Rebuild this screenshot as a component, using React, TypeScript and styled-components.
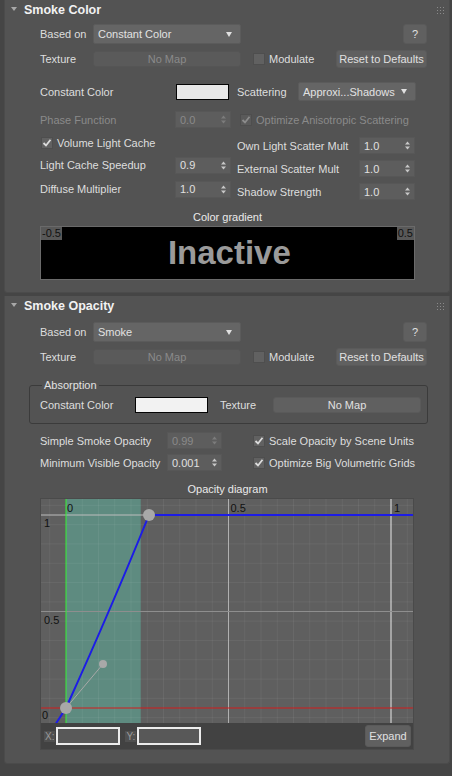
import React from 'react';
import styled, { createGlobalStyle } from 'styled-components';

const GlobalStyle = createGlobalStyle`
  body {
    margin: 0;
    background: #454545;
    font-family: "Liberation Sans", Arial, sans-serif;
    font-size: 11px;
    color: #dedede;
  }
`;

const Page = styled.div`
  width: 452px;
  height: 776px;
  box-sizing: border-box;
`;

const Panel = styled.section<{ $pb: number }>`
  margin: 0 2px 3px 4px;
  background: #535353;
  border: 1px solid #4b4b4b;
  border-top: none;
  border-radius: 0 0 3px 3px;
  padding-bottom: ${(p) => p.$pb}px;
`;

const Header = styled.div`
  height: 20px;
  display: flex;
  align-items: center;
  padding-left: 6px;
  padding-right: 5px;
  font-weight: bold;
  font-size: 12.5px;
  color: #f2f2f2;
`;

const Caret = styled.span`
  width: 0;
  height: 0;
  border-left: 3px solid transparent;
  border-right: 3px solid transparent;
  border-top: 4px solid #a8a8a8;
  margin-right: 7px;
  margin-top: -2px;
`;

const Title = styled.span`
  flex: 1;
`;

const Body = styled.div`
  padding-left: 35px;
  padding-right: 22px;
`;

const Row = styled.div<{ $h: number; $mt: number }>`
  display: flex;
  align-items: center;
  height: ${(p) => p.$h}px;
  margin-top: ${(p) => p.$mt}px;
`;

const Label = styled.span<{ $w?: number; $dim?: boolean; $ml?: number }>`
  width: ${(p) => (p.$w ? `${p.$w}px` : 'auto')};
  flex-shrink: 0;
  margin-left: ${(p) => p.$ml || 0}px;
  color: ${(p) => (p.$dim ? '#8a8a8a' : '#dedede')};
  white-space: nowrap;
`;

const Dropdown = styled.div<{ $w: number }>`
  width: ${(p) => p.$w}px;
  height: 100%;
  box-sizing: border-box;
  background: #656565;
  border: 1px solid #5b5b5b;
  border-radius: 2px;
  display: flex;
  align-items: center;
  padding: 0 8px 0 4px;
  color: #e2e2e2;
  white-space: nowrap;

  &::after {
    content: '';
    margin-left: auto;
    border-left: 3px solid transparent;
    border-right: 3px solid transparent;
    border-top: 5px solid #e0e0e0;
  }
`;

const Button = styled.div<{ $w: number; $h: number; $dim?: boolean; $ml?: number }>`
  width: ${(p) => p.$w}px;
  height: ${(p) => p.$h}px;
  margin-left: ${(p) => (p.$ml === undefined ? 0 : p.$ml)}px;
  box-sizing: border-box;
  background: ${(p) => (p.$dim ? '#5a5a5a' : '#606060')};
  border: 1px solid ${(p) => (p.$dim ? '#555' : '#5a5a5a')};
  border-radius: 3px;
  display: flex;
  align-items: center;
  justify-content: center;
  color: ${(p) => (p.$dim ? '#8a8a8a' : '#e0e0e0')};
  white-space: nowrap;
  flex-shrink: 0;
`;

const Spacer = styled.div`
  flex: 1;
`;

const Swatch = styled.div<{ $w: number; $c: string }>`
  width: ${(p) => p.$w}px;
  height: 16px;
  box-sizing: border-box;
  border: 1px solid #050505;
  background: ${(p) => p.$c};
  flex-shrink: 0;
`;

const Box = styled.div<{ $dim?: boolean; $ml?: number }>`
  width: 12px;
  height: 12px;
  box-sizing: border-box;
  margin-left: ${(p) => p.$ml || 0}px;
  margin-right: 4px;
  background: ${(p) => (p.$dim ? '#5a5a5a' : '#616161')};
  border: 1px solid #4e4e4e;
  display: flex;
  align-items: center;
  justify-content: center;
  flex-shrink: 0;
`;

const Spin = styled.div<{ $w: number; $dim?: boolean }>`
  width: ${(p) => p.$w}px;
  height: 17px;
  box-sizing: border-box;
  background: #5d5d5d;
  border: 1px solid #575757;
  display: flex;
  align-items: center;
  padding: 0 4px 0 4px;
  color: ${(p) => (p.$dim ? '#8a8a8a' : '#e0e0e0')};
  flex-shrink: 0;
`;

const SpinText = styled.span`
  flex: 1;
`;

const Columns = styled.div`
  display: flex;
  margin-top: 8px;
`;

const Col = styled.div<{ $w: number; $pt: number }>`
  width: ${(p) => p.$w}px;
  padding-top: ${(p) => p.$pt}px;
  display: flex;
  flex-direction: column;
`;

const Caption = styled.div<{ $mt: number }>`
  margin-top: ${(p) => p.$mt}px;
  height: 12px;
  line-height: 12px;
  text-align: center;
  width: 375px;
  color: #eaeaea;
`;

const Gradient = styled.div`
  margin-top: 3px;
  width: 375px;
  height: 54px;
  box-sizing: border-box;
  background: #000;
  border: 1px solid #6a6a6a;
  display: flex;
  align-items: flex-start;
  justify-content: space-between;
`;

const Tick = styled.span`
  background: #585858;
  color: #111;
  font-size: 11px;
  line-height: 13px;
  padding: 0 1px;
`;

const Inactive = styled.span`
  font-size: 33px;
  font-weight: bold;
  color: #9a9a9a;
  line-height: 52px;
`;

const Group = styled.fieldset`
  margin: 13px 0 0 -11px;
  width: 399px;
  box-sizing: border-box;
  border: 1px solid #3b3b3b;
  border-radius: 3px;
  padding: 5px 0 10px 10px;
`;

const Legend = styled.legend`
  padding: 0 2px;
  margin-left: 2px;
  line-height: 13px;
  color: #e2e2e2;
`;

const Diagram = styled.div`
  margin-top: 3px;
  width: 374px;
  border: 1px solid #4a4a4a;
  box-sizing: border-box;
`;

const Bottom = styled.div`
  height: 26px;
  background: #424242;
  display: flex;
  align-items: center;
  padding: 0 2px 0 0;
`;

const AxisTag = styled.span<{ $ml: number }>`
  background: #505050;
  color: #9a9a9a;
  font-size: 10px;
  padding: 0 1px;
  margin-right: 1px;
  margin-left: ${(p) => p.$ml}px;
`;

const Field = styled.div`
  width: 64px;
  height: 18px;
  box-sizing: border-box;
  border: 2px solid #ececec;
  background: #585858;
`;

function Check({ dim }: { dim?: boolean }) {
  return (
    <svg width="10" height="10" viewBox="0 0 10 10">
      <path d="M1.5 5 L4 7.5 L8.5 1.8" fill="none" stroke={dim ? '#8c8c8c' : '#dcdcdc'} strokeWidth="1.8" />
    </svg>
  );
}

function Arrows({ dim }: { dim?: boolean }) {
  const c = dim ? '#7c7c7c' : '#c8c8c8';
  return (
    <svg width="5" height="9" viewBox="0 0 5 9">
      <path d="M0 3.5 L2.5 0.5 L5 3.5 Z M0 5.5 L2.5 8.5 L5 5.5 Z" fill={c} />
    </svg>
  );
}

function Grip() {
  return (
    <svg width="7" height="7" viewBox="0 0 7 7">
      {[0, 3, 6].map((x) => [0, 3, 6].map((y) => <rect key={`${x}${y}`} x={x} y={y} width="1" height="1" fill="#8a8a8a" />))}
    </svg>
  );
}

const CheckRow = ({ label, checked, dim, ml }: { label: string; checked?: boolean; dim?: boolean; ml?: number }) => (
  <>
    <Box $dim={dim} $ml={ml}>{checked && <Check dim={dim} />}</Box>
    <Label $dim={dim}>{label}</Label>
  </>
);

const SpinBox = ({ value, w, dim }: { value: string; w: number; dim?: boolean }) => (
  <Spin $w={w} $dim={dim}>
    <SpinText>{value}</SpinText>
    <Arrows dim={dim} />
  </Spin>
);

function Graph() {
  const X = (v: number) => 25 + v * 325;
  const Y = (v: number) => 209 - v * 193;
  const minorX: number[] = [];
  for (let v = -0.05; v <= 1.1; v += 0.05) minorX.push(X(v));
  const minorY: number[] = [];
  for (let v = -0.05; v <= 1.1; v += 0.1) minorY.push(Y(v));
  return (
    <svg width="372" height="224" viewBox="0 0 372 224" style={{ display: 'block' }}>
      <rect width="372" height="224" fill="#5f5f5f" />
      <rect x={X(0)} y="0" width={X(0.23) - X(0)} height="224" fill="#5e8b80" />
      {minorX.map((x, i) => (
        <line key={`vx${i}`} x1={x} y1="0" x2={x} y2="224" stroke="#ffffff" strokeOpacity="0.06" />
      ))}
      {minorY.map((y, i) => (
        <line key={`hy${i}`} x1="0" y1={y} x2="372" y2={y} stroke="#ffffff" strokeOpacity="0.06" />
      ))}
      <line x1={X(0.5)} y1="0" x2={X(0.5)} y2="224" stroke="#b0b0b0" />
      <line x1={X(1)} y1="0" x2={X(1)} y2="224" stroke="#e6e6e6" />
      <line x1="0" y1={Y(1)} x2="372" y2={Y(1)} stroke="#bdbdbd" />
      <line x1="0" y1={Y(0.5)} x2="372" y2={Y(0.5)} stroke="#8e8e8e" />
      <line x1="0" y1={Y(0)} x2="372" y2={Y(0)} stroke="#d21c1c" />
      <line x1={X(0)} y1="0" x2={X(0)} y2="224" stroke="#33ee33" />
      <g fontFamily="Liberation Sans, Arial, sans-serif" fontSize="11" fill="#111">
        <text x={X(0) + 1} y="13">0</text>
        <text x={X(0.5) + 2} y="13">0.5</text>
        <text x={X(1) + 3} y="13">1</text>
        <text x="3" y={Y(1) + 12}>1</text>
        <text x="3" y={Y(0.5) + 12}>0.5</text>
        <text x="1" y={Y(0) + 11}>0</text>
      </g>
      <line x1={X(0)} y1={Y(0)} x2="62" y2="165" stroke="#a8a8a8" strokeWidth="1" />
      <path
        d={`M14 226 L${X(0)} ${Y(0)} C34 189 70 110 108 ${Y(1)} L372 ${Y(1)}`}
        fill="none"
        stroke="#1c1ce6"
        strokeWidth="2"
      />
      <circle cx="62" cy="165" r="4" fill="#a8a8a8" />
      <circle cx={X(0)} cy={Y(0)} r="6" fill="#a8a8a8" />
      <circle cx="108" cy={Y(1)} r="6" fill="#a8a8a8" />
    </svg>
  );
}

export default function App() {
  return (
    <Page>
      <GlobalStyle />
      <Panel $pb={12}>
        <Header>
          <Caret />
          <Title>Smoke Color</Title>
          <Grip />
        </Header>
        <Body>
          <Row $h={20} $mt={4}>
            <Label $w={53}>Based on</Label>
            <Dropdown $w={148}>Constant Color</Dropdown>
            <Spacer />
            <Button $w={24} $h={20}>?</Button>
          </Row>
          <Row $h={18} $mt={6}>
            <Label $w={53}>Texture</Label>
            <Button $w={148} $h={16} $dim>No Map</Button>
            <CheckRow label="Modulate" ml={12} />
            <Spacer />
            <Button $w={91} $h={18}>Reset to Defaults</Button>
          </Row>
          <Row $h={19} $mt={14}>
            <Label $w={136}>Constant Color</Label>
            <Swatch $w={53} $c="#e8e8e8" />
            <Label $w={61} $ml={8}>Scattering</Label>
            <Dropdown $w={118}>Approxi...Shadows</Dropdown>
          </Row>
          <Row $h={17} $mt={10}>
            <Label $w={135} $dim>Phase Function</Label>
            <SpinBox value="0.0" w={56} dim />
            <CheckRow label="Optimize Anisotropic Scattering" checked dim ml={9} />
          </Row>
          <Columns>
            <Col $w={197} $pt={0}>
              <Row $h={13} $mt={0}>
                <CheckRow label="Volume Light Cache" checked ml={1} />
              </Row>
              <Row $h={16} $mt={8}>
                <Label $w={135}>Light Cache Speedup</Label>
                <SpinBox value="0.9" w={56} />
              </Row>
              <Row $h={16} $mt={8}>
                <Label $w={135}>Diffuse Multiplier</Label>
                <SpinBox value="1.0" w={56} />
              </Row>
            </Col>
            <Col $w={180} $pt={1}>
              <Row $h={17} $mt={0}>
                <Label $w={122}>Own Light Scatter Mult</Label>
                <SpinBox value="1.0" w={56} />
              </Row>
              <Row $h={17} $mt={6}>
                <Label $w={122}>External Scatter Mult</Label>
                <SpinBox value="1.0" w={56} />
              </Row>
              <Row $h={17} $mt={6}>
                <Label $w={122}>Shadow Strength</Label>
                <SpinBox value="1.0" w={56} />
              </Row>
            </Col>
          </Columns>
          <Caption $mt={11}>Color gradient</Caption>
          <Gradient>
            <Tick>-0.5</Tick>
            <Inactive>Inactive</Inactive>
            <Tick>0.5</Tick>
          </Gradient>
        </Body>
      </Panel>
      <Panel $pb={13}>
        <Header>
          <Caret />
          <Title>Smoke Opacity</Title>
          <Grip />
        </Header>
        <Body>
          <Row $h={20} $mt={6}>
            <Label $w={53}>Based on</Label>
            <Dropdown $w={148}>Smoke</Dropdown>
            <Spacer />
            <Button $w={24} $h={20}>?</Button>
          </Row>
          <Row $h={18} $mt={6}>
            <Label $w={53}>Texture</Label>
            <Button $w={148} $h={16} $dim>No Map</Button>
            <CheckRow label="Modulate" ml={12} />
            <Spacer />
            <Button $w={91} $h={18}>Reset to Defaults</Button>
          </Row>
          <Group>
            <Legend>Absorption</Legend>
            <Row $h={16} $mt={0}>
              <Label $w={95}>Constant Color</Label>
              <Swatch $w={73} $c="#f2f2f2" />
              <Label $w={53} $ml={12}>Texture</Label>
              <Button $w={148} $h={16}>No Map</Button>
            </Row>
          </Group>
          <Row $h={17} $mt={8}>
            <Label $w={127}>Simple Smoke Opacity</Label>
            <SpinBox value="0.99" w={55} dim />
            <CheckRow label="Scale Opacity by Scene Units" checked ml={31} />
          </Row>
          <Row $h={17} $mt={5}>
            <Label $w={127}>Minimum Visible Opacity</Label>
            <SpinBox value="0.001" w={55} />
            <CheckRow label="Optimize Big Volumetric Grids" checked ml={31} />
          </Row>
          <Caption $mt={12}>Opacity diagram</Caption>
          <Diagram>
            <Graph />
            <Bottom>
              <AxisTag $ml={3}>X:</AxisTag>
              <Field />
              <AxisTag $ml={5}>Y:</AxisTag>
              <Field />
              <Spacer />
              <Button $w={46} $h={22}>Expand</Button>
            </Bottom>
          </Diagram>
        </Body>
      </Panel>
    </Page>
  );
}
